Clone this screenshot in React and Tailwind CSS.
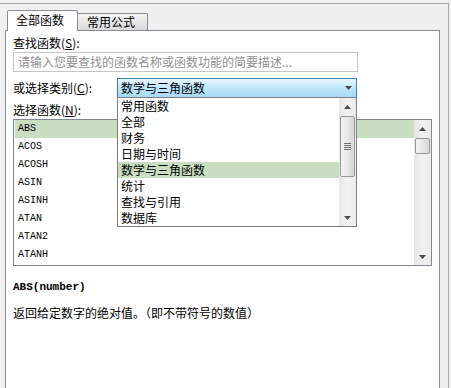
import React from "react";

function Arrow({ up }) {
  return (
    <svg width="7" height="4" viewBox="0 0 7 4" className="block">
      <polygon points={up ? "0,4 3.5,0 7,4" : "0,0 7,0 3.5,4"} fill="#4a4a4a" />
    </svg>
  );
}

function Thumb({ className, grip }) {
  return (
    <div
      className={
        "w-[15px] mx-auto border border-[#979797] rounded-[2px] bg-gradient-to-r from-[#f4f4f4] via-[#e8e8e8] to-[#d6d6d6] flex flex-col items-center justify-center gap-[1px] " +
        className
      }
    >
      {grip ? (
        <>
          <div className="w-[7px] h-[1px] bg-[#6f6f6f]" />
          <div className="w-[7px] h-[1px] bg-[#6f6f6f]" />
          <div className="w-[7px] h-[1px] bg-[#6f6f6f]" />
          <div className="w-[7px] h-[1px] bg-[#6f6f6f]" />
        </>
      ) : null}
    </div>
  );
}

function ScrollBar({ thumbClass, grip }) {
  return (
    <div className="w-[17px] h-full shrink-0 flex flex-col bg-gradient-to-r from-[#e6e6e6] via-[#f2f2f2] to-[#ebebeb]">
      <div className="h-[17px] shrink-0 flex items-center justify-center">
        <Arrow up />
      </div>
      <div className="flex-1 flex flex-col">
        <Thumb className={thumbClass} grip={grip} />
      </div>
      <div className="h-[17px] shrink-0 flex items-center justify-center">
        <Arrow />
      </div>
    </div>
  );
}

const categories = ["常用函数", "全部", "财务", "日期与时间", "数学与三角函数", "统计", "查找与引用", "数据库"];
const funcs = ["ABS", "ACOS", "ACOSH", "ASIN", "ASINH", "ATAN", "ATAN2", "ATANH"];

export default function App() {
  return (
    <div className="w-[451px] h-[388px] overflow-hidden bg-[#f0f0f0] pt-[3px] font-['Noto_Sans_CJK_SC','Noto_Sans',sans-serif] text-[12px] text-black">
      <div className="w-[449px] h-[400px] border-t border-r border-[#a9a9a9] pl-[5px] pr-[8px] pt-[6px] flex flex-col">
        {/* tabs */}
        <div className="flex items-end h-[20px] pl-[2px] shrink-0">
          <div className="relative z-10 h-[21px] w-[71px] -mb-[1px] border border-b-0 border-[#898c95] bg-white rounded-t-[2px] pl-[8px] pt-[2px] leading-[14px]">
            全部函数
          </div>
          <div className="h-[17px] w-[70px] border-t border-r border-[#898c95] rounded-tr-[2px] bg-gradient-to-b from-[#f3f3f3] to-[#dadada] pl-[9px] pt-[1px] leading-[14px]">
            常用公式
          </div>
        </div>

        {/* panel */}
        <div className="flex-1 border border-b-0 border-[#898c95] bg-white pl-[7px] pt-[5px] flex flex-col">
          <div className="h-[14px] leading-[14px]">
            查找函数(<span className="underline">S</span>):
          </div>
          <div className="mt-[2px] w-[345px] h-[20px] border border-[#c6c6c6] pl-[4px] leading-[18px] text-[#909090]">
            请输入您要查找的函数名称或函数功能的简要描述...
          </div>

          <div className="mt-[6px] h-[20px] flex items-center">
            <div className="w-[104px] leading-[14px]">
              或选择类别(<span className="underline">C</span>):
            </div>
            <div className="relative w-[240px] h-[20px]">
              <div className="w-full h-full border border-[#3c7fb1] bg-gradient-to-b from-[#eaf6fd] via-[#bee6fd] to-[#a7d9f5] pl-[3px] pr-[4px] flex items-center justify-between leading-[18px]">
                <span>数学与三角函数</span>
                <Arrow />
              </div>
              {/* dropdown */}
              <div className="absolute left-0 top-[19px] z-20 w-[240px] h-[130px] border border-[#7f7f7f] bg-white flex">
                <div className="flex-1 flex flex-col">
                  {categories.map((c, i) => (
                    <div
                      key={c}
                      className={
                        "h-[16px] leading-[16px] pl-[3px] " + (i === 4 ? "bg-[#c9dec1]" : "")
                      }
                    >
                      {c}
                    </div>
                  ))}
                </div>
                <ScrollBar thumbClass="mt-[1px] h-[61px]" grip />
              </div>
            </div>
          </div>

          <div className="mt-[5px] h-[14px] leading-[14px]">
            选择函数(<span className="underline">N</span>):
          </div>
          <div className="mt-[2px] w-[419px] h-[147px] border border-[#828790] flex">
            <div className="flex-1 flex flex-col pl-[1px] font-['Liberation_Mono',monospace] text-[10px]">
              {funcs.map((f, i) => (
                <div
                  key={f}
                  className={"h-[18px] leading-[18px] pl-[3px] " + (i === 0 ? "bg-[#c9dec1]" : "")}
                >
                  {f}
                </div>
              ))}
            </div>
            <ScrollBar thumbClass="mt-[1px] h-[16px]" />
          </div>

          <div className="mt-[14px] h-[14px] leading-[14px] font-['Liberation_Mono',monospace] font-bold text-[11px]">
            ABS(number)
          </div>
          <div className="mt-[12px] h-[14px] leading-[14px]">
            返回给定数字的绝对值。（即不带符号的数值）
          </div>
        </div>
      </div>
    </div>
  );
}
